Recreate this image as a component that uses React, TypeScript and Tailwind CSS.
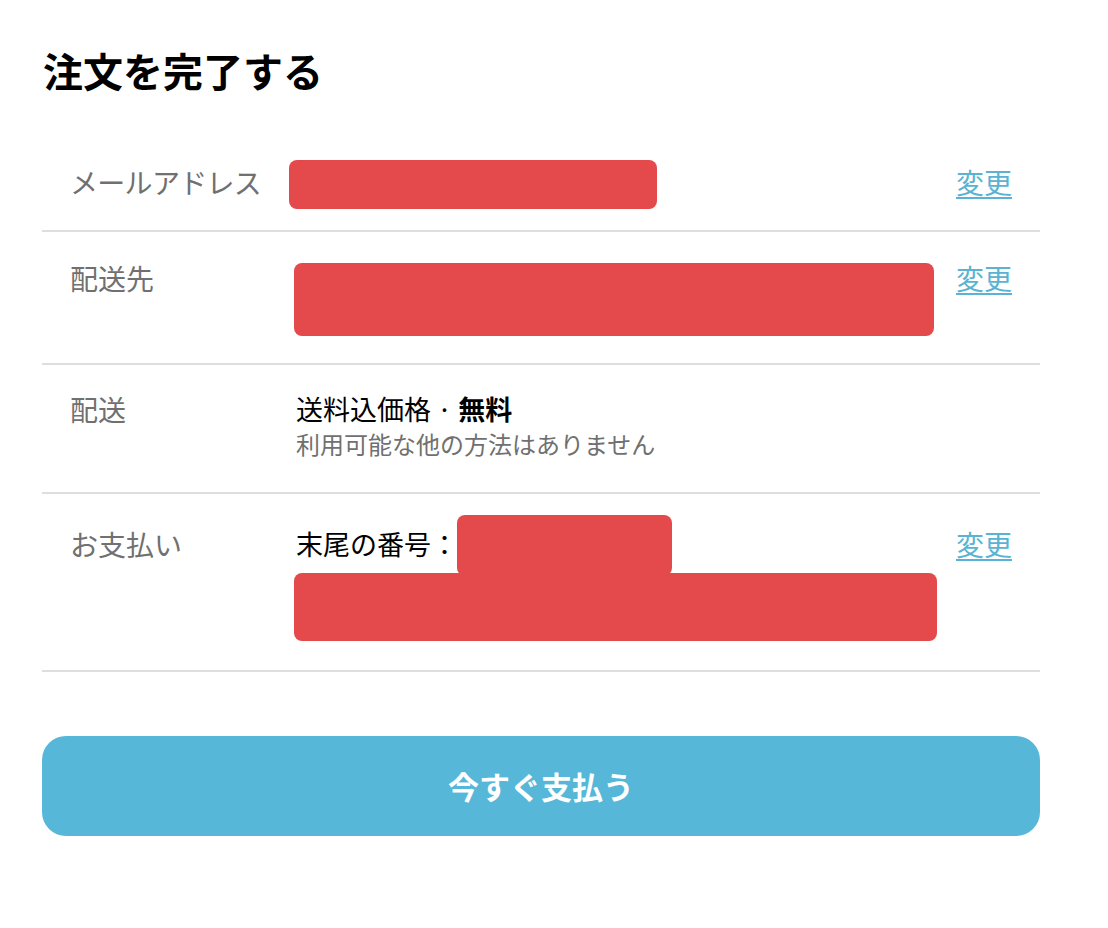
import React from "react";

const font = { fontFamily: '"Noto Sans CJK JP", "Noto Sans", sans-serif' };

function Change({ shift = false }: { shift?: boolean }) {
  return (
    <a
      className={
        shift
          ? "relative top-[-3px] w-[56px] ml-[19px] shrink-0 text-[28px] leading-[36px] text-[#5ab3d3] underline underline-offset-[3px] decoration-[1.5px] whitespace-nowrap cursor-pointer"
          : "w-[56px] ml-[19px] shrink-0 text-[28px] leading-[36px] text-[#5ab3d3] underline underline-offset-[3px] decoration-[1.5px] whitespace-nowrap cursor-pointer"
      }
    >
      変更
    </a>
  );
}

function Label({ children }: { children: React.ReactNode }) {
  return (
    <div className="w-[224px] shrink-0 text-[28px] leading-[36px] text-[#707070]">{children}</div>
  );
}

export default function App() {
  return (
    <div className="min-h-[928px] w-full bg-white" style={font}>
      <div className="ml-[42px] w-[998px] pt-[44px]">
        <h1 className="text-[40px] leading-[52px] font-bold text-black mb-[34px] ml-[1px]">
          注文を完了する
        </h1>

        {/* Email row */}
        <div className="flex items-center px-[28px] pt-[30px] pb-[21px] border-b-2 border-[#dedede]">
          <Label>
            <span className="relative top-[-3px] tracking-[-0.7px]">メールアドレス</span>
          </Label>
          <div className="flex-1">
            <div className="ml-[-5px] w-[368px] h-[49px] rounded-[8px] bg-[#e4494c]" />
          </div>
          <Change shift />
        </div>

        {/* Shipping address row */}
        <div className="flex items-start px-[28px] pt-[28px] pb-[27px] border-b-2 border-[#dedede]">
          <Label>配送先</Label>
          <div className="flex-1">
            <div className="mt-[3px] w-[640px] h-[73px] rounded-[8px] bg-[#e4494c]" />
          </div>
          <Change />
        </div>

        {/* Shipping method row */}
        <div className="flex items-start px-[28px] pt-[26px] pb-[31px] border-b-2 border-[#dedede]">
          <Label>配送</Label>
          <div className="flex-1">
            <div className="text-[27px] leading-[36px] text-black pl-[2px]">
              送料込価格 · <span className="font-bold">無料</span>
            </div>
            <div className="text-[24px] leading-[34px] text-[#707070] pl-[2px]">
              利用可能な他の方法はありません
            </div>
          </div>
          <div className="w-[56px] ml-[19px] shrink-0" />
        </div>

        {/* Payment row */}
        <div className="flex items-start px-[28px] pt-[32px] pb-[29px] border-b-2 border-[#dedede]">
          <Label>お支払い</Label>
          <div className="flex-1">
            <div className="relative h-[36px] text-[27px] leading-[36px] text-black pl-[2px]">
              末尾の番号：
              <div className="absolute left-[163px] top-[-11px] w-[215px] h-[61px] rounded-[8px] bg-[#e4494c]" />
            </div>
            <div className="mt-[11px] w-full h-[68px] rounded-[8px] bg-[#e4494c]" />
          </div>
          <Change />
        </div>

        <button className="mt-[64px] w-full h-[100px] rounded-[24px] bg-[#56b7d8] text-white text-[31px] font-bold flex items-center justify-center">
          今すぐ支払う
        </button>
      </div>
    </div>
  );
}
